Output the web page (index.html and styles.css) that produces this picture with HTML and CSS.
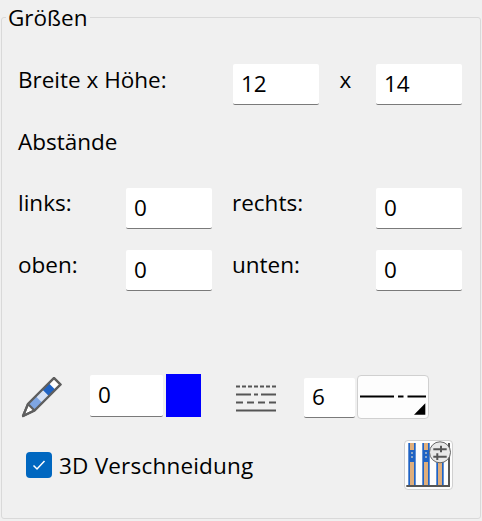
FILE: index.html
```html
<!DOCTYPE html>
<html lang="de">
<head>
  <meta charset="UTF-8" />
  <title>Größen</title>
  <link rel="stylesheet" href="styles.css">
</head>
<body>
  <fieldset class="group">
    <legend>Größen</legend>

    <div class="row row-size">
      <label class="lbl-wide">Breite x Höhe:</label>
      <input class="num" type="text" value="12" />
      <span class="times">x</span>
      <input class="num" type="text" value="14" />
    </div>

    <div class="heading">Abstände</div>

    <div class="row row-margin">
      <label class="lbl-short">links:</label>
      <input class="num" type="text" value="0" />
      <label class="lbl-right">rechts:</label>
      <input class="num" type="text" value="0" />
    </div>
    <div class="row row-margin second">
      <label class="lbl-short">oben:</label>
      <input class="num" type="text" value="0" />
      <label class="lbl-right">unten:</label>
      <input class="num" type="text" value="0" />
    </div>

    <div class="row row-pen">
      <svg class="pencil" width="42" height="42" viewBox="0 0 42 42">
        <path d="M2 39 L7 27 L33 1 L39.500 7.500 L13.500 33.500 Z" fill="#fff" stroke="#5f5f5f" stroke-width="2.200" stroke-linejoin="round"/>
        <path d="M27.800 6.200 L34.300 12.700 L27.800 19.200 L21.300 12.700 Z" fill="#1f63c4"/>
        <path d="M21.300 12.700 L27.800 19.200 L21.300 25.700 L14.800 19.200 Z" fill="#d3e0f5"/>
        <path d="M14.800 19.200 L21.300 25.700 L13.500 33.500 L7 27 Z" fill="#7fa6e3"/>
        <path d="M2 39 L7 27 L33 1 L39.500 7.500 L13.500 33.500 Z M7 27 L13.500 33.500" fill="none" stroke="#5f5f5f" stroke-width="2.200" stroke-linejoin="round"/>
      </svg>
      <input class="num pen-num" type="text" value="0" />
      <div class="swatch"></div>
      <svg class="lines" width="40" height="28" viewBox="0 0 40 28">
        <path d="M0 1.500h4M6 1.500h4M12 1.500h4M18 1.500h4M24 1.500h4M30 1.500h4M36 1.500h4" stroke="#555" stroke-width="2"/>
        <path d="M0 9.500h15M18 9.500h4M25 9.500h15" stroke="#555" stroke-width="2"/>
        <path d="M0 17.500h7M11 17.500h7M22 17.500h7M33 17.500h7" stroke="#555" stroke-width="2"/>
        <path d="M0 25.500h40" stroke="#555" stroke-width="2"/>
      </svg>
      <input class="num width-num" type="text" value="6" />
      <button class="line-btn" type="button">
        <svg width="70" height="42" viewBox="0 0 70 42">
          <path d="M2 20.500h34M40 20.500h5.500M49.500 20.500h18.500" stroke="#000" stroke-width="2"/>
          <path d="M56 38.700 L67.300 38.700 L67.300 27.300 Z" fill="#000"/>
        </svg>
      </button>
    </div>

    <div class="row row-check">
      <label class="check">
        <span class="box">
          <svg width="14" height="12" viewBox="0 0 14 12"><path d="M1.500 6.500 L5 10 L12.500 2" fill="none" stroke="#fff" stroke-width="1.500"/></svg>
        </span>
        3D Verschneidung
      </label>
      <button class="icon-btn" type="button">
        <svg width="47" height="48" viewBox="0 0 47 48">
          <path d="M7 2v42M21 2v42M35 2v42" stroke="#1f63c4" stroke-width="7.400"/>
          <path d="M7 2v42M21 2v42M35 2v42" stroke="#dfae7c" stroke-width="4"/>
          <path d="M7 9v12M21 9v12" stroke="#1f63c4" stroke-width="4"/>
          <path d="M7 11v2M7 15v2M21 11v2M21 15v2" stroke="#8fa8c8" stroke-width="2"/>
          <path d="M44 2v43M1.300 45h43.700" stroke="#555" stroke-width="2"/>
          <circle cx="35" cy="11.300" r="10.500" fill="#e8e8e8" stroke="#666" stroke-width="1"/>
          <path d="M28.300 8.300h13.400M28.300 15.700h13.400M36 4.700v6.600M32.300 12.300v6.700" stroke="#555" stroke-width="2"/>
        </svg>
      </button>
    </div>
  </fieldset>
</body>
</html>
```

FILE: styles.css
```css
html, body { margin: 0; padding: 0; }
body {
  width: 482px; height: 521px; background: #f0f0f0; overflow: hidden;
  font-family: "Open Sans", sans-serif; font-size: 22.5px; color: #000;
}
.group {
  box-sizing: border-box; width: 480px; height: 513px; margin: 6px 0 0 1px; padding: 0;
  border: 1px solid #d9d9d9; border-radius: 3px;
}
legend { margin-left: 4px; padding: 2px 2px 0; line-height: 20px; }
.row { display: flex; align-items: flex-start; }
.num {
  box-sizing: border-box; width: 86px; height: 41px; padding: 0 0 2px 8px; margin: 0;
  border: 0; border-bottom: 1px solid #7a7a7a; border-radius: 2px; background: #fff;
  font: inherit; color: #000; outline: 0;
}
.row-size { margin: 36px 0 0 16px; }
.lbl-wide { width: 215px; line-height: 32px; }
.times { box-sizing: border-box; width: 57px; padding-right: 4px; text-align: center; line-height: 32px; }
.heading { margin: 22px 0 0 16px; line-height: 30px; }
.row-margin { margin: 31px 0 0 16px; }
.row-margin.second { margin-top: 21px; }
.lbl-short { width: 108px; line-height: 30px; }
.lbl-right { width: 144px; margin-left: 20px; line-height: 30px; }
.row-pen { margin: 83px 0 0 19px; }
.pencil { margin-top: 3px; }
.pen-num { width: 73px; height: 42px; margin: 1px 0 0 27px; }
.swatch { width: 35px; height: 43px; margin-left: 3px; background: #0000ff; }
.lines { margin: 11px 0 0 35px; }
.width-num { width: 51px; height: 40px; margin: 4px 0 0 28px; }
.line-btn, .icon-btn {
  box-sizing: border-box; padding: 0; background: #fdfdfd;
  border: 1px solid #d0d0d0; border-radius: 4px;
}
.line-btn { width: 72px; height: 44px; margin: 1px 0 0 2px; display: flex; }
.row-check { justify-content: space-between; margin: 21px 27px 0 24px; }
.check { display: flex; align-items: center; gap: 7px; margin-top: 10px; height: 30px; letter-spacing: .2px; }
.box {
  box-sizing: border-box; width: 26px; height: 26px; background: #0067c0; border-radius: 4px;
  display: flex; align-items: center; justify-content: center;
}
.icon-btn { width: 49px; height: 50px; display: flex; align-items: center; justify-content: center; }
```
